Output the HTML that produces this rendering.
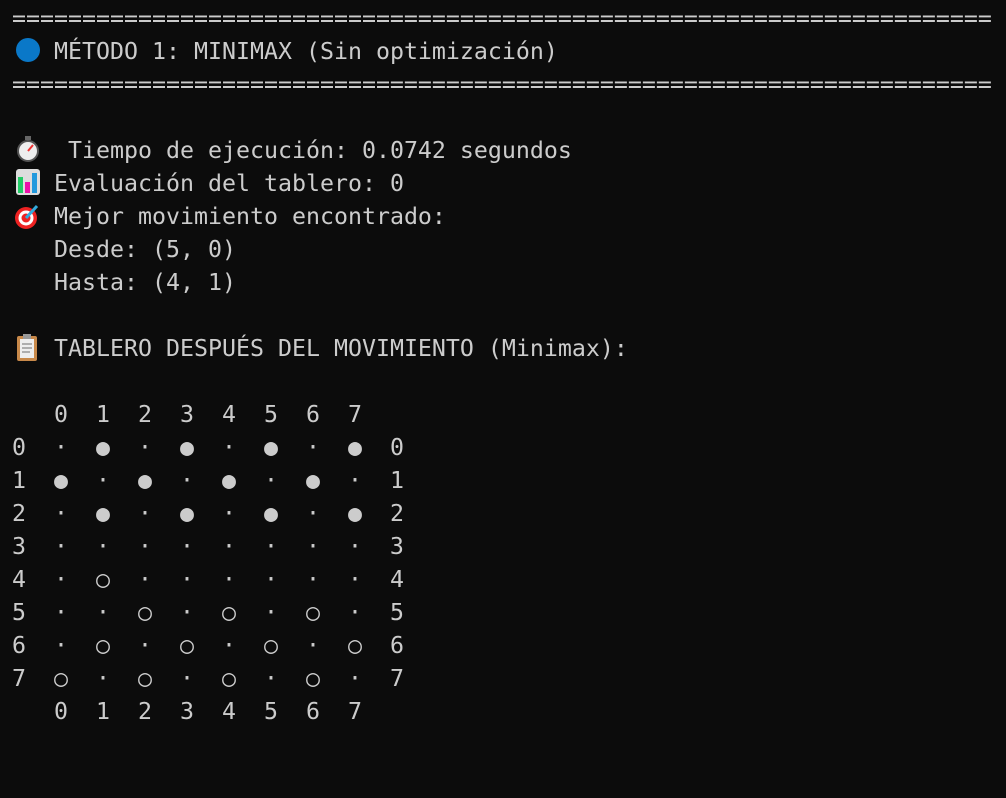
<!DOCTYPE html>
<html><head><meta charset="utf-8"><style>
html,body{margin:0;background:#0c0c0c;width:1006px;height:798px;overflow:hidden}
pre{position:absolute;left:12px;top:2px;margin:0;font-family:"DejaVu Sans Mono","Liberation Mono",monospace;font-size:23.25px;line-height:33px;color:#cccccc;letter-spacing:0}
.e{display:inline-block;width:28px;height:28px;vertical-align:-6px;position:relative}
.e svg{position:absolute;left:0;top:0}
.c{display:inline-block;width:14px;text-align:center}
</style></head><body>
<pre>======================================================================
<span class="e"><svg width="28" height="28"><circle cx="16" cy="13" r="12" fill="#0a78c8"/></svg></span> MÉTODO 1: MINIMAX (Sin optimización)
======================================================================

<span class="e"><svg width="28" height="28"><rect x="13" y="0" width="6" height="4" fill="#666"/><circle cx="16" cy="15" r="10" fill="#eee" stroke="#555" stroke-width="2"/><line x1="16" y1="15" x2="21" y2="9" stroke="#e33" stroke-width="2"/></svg></span>  Tiempo de ejecución: 0.0742 segundos
<span class="e"><svg width="28" height="28"><rect x="4" y="0" width="24" height="26" rx="3" fill="#ddd"/><rect x="6" y="8" width="5" height="16" fill="#2c6"/><rect x="13" y="13" width="5" height="11" fill="#e1a"/><rect x="20" y="4" width="5" height="20" fill="#29d"/></svg></span> Evaluación del tablero: 0
<span class="e"><svg width="28" height="28"><circle cx="14" cy="16" r="11" fill="#e22"/><circle cx="14" cy="16" r="7.5" fill="#fff"/><circle cx="14" cy="16" r="4.5" fill="#e22"/><line x1="14" y1="16" x2="25" y2="4" stroke="#3ad" stroke-width="3"/></svg></span> Mejor movimiento encontrado:
   Desde: (5, 0)
   Hasta: (4, 1)

<span class="e"><svg width="28" height="28"><rect x="5" y="2" width="20" height="25" rx="2" fill="#c8894a"/><rect x="8" y="5" width="14" height="19" fill="#eee"/><rect x="11" y="0" width="8" height="5" fill="#999"/><g stroke="#999" stroke-width="1.5"><line x1="10" y1="10" x2="20" y2="10"/><line x1="10" y1="14" x2="20" y2="14"/><line x1="10" y1="18" x2="18" y2="18"/></g></svg></span> TABLERO DESPUÉS DEL MOVIMIENTO (Minimax):

   0  1  2  3  4  5  6  7
0  ·  <span class="c">●</span>  ·  <span class="c">●</span>  ·  <span class="c">●</span>  ·  <span class="c">●</span>  0
1  <span class="c">●</span>  ·  <span class="c">●</span>  ·  <span class="c">●</span>  ·  <span class="c">●</span>  ·  1
2  ·  <span class="c">●</span>  ·  <span class="c">●</span>  ·  <span class="c">●</span>  ·  <span class="c">●</span>  2
3  ·  ·  ·  ·  ·  ·  ·  ·  3
4  ·  <span class="c">○</span>  ·  ·  ·  ·  ·  ·  4
5  ·  ·  <span class="c">○</span>  ·  <span class="c">○</span>  ·  <span class="c">○</span>  ·  5
6  ·  <span class="c">○</span>  ·  <span class="c">○</span>  ·  <span class="c">○</span>  ·  <span class="c">○</span>  6
7  <span class="c">○</span>  ·  <span class="c">○</span>  ·  <span class="c">○</span>  ·  <span class="c">○</span>  ·  7
   0  1  2  3  4  5  6  7
</pre>
</body></html>
